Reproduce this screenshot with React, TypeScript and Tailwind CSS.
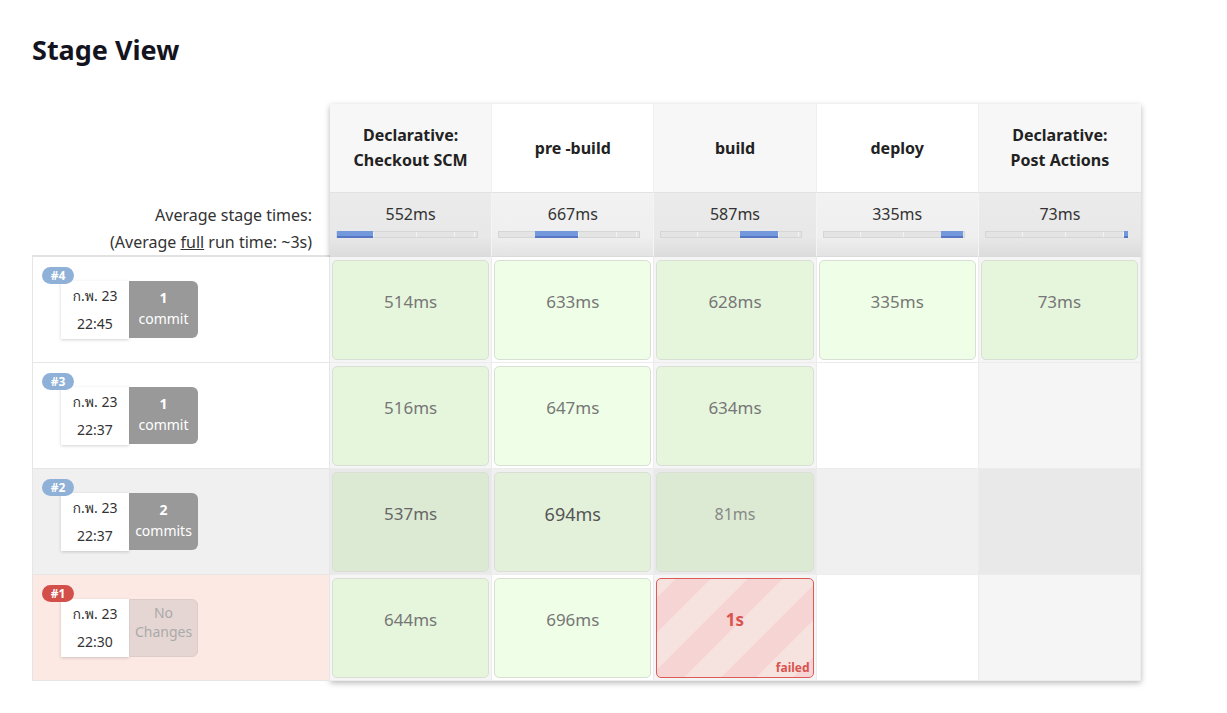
import React from "react";

type Cell = { t: string; kind: "ok" | "fail"; size?: string; color?: string } | null;

const stages = [
  ["Declarative:", "Checkout SCM"],
  ["pre -build"],
  ["build"],
  ["deploy"],
  ["Declarative:", "Post Actions"],
];

const avgs = [
  { t: "552ms", a: 0, b: 36 },
  { t: "667ms", a: 36, b: 79 },
  { t: "587ms", a: 79, b: 117 },
  { t: "335ms", a: 117, b: 139 },
  { t: "73ms", a: 138, b: 142 },
];

const builds: {
  id: string;
  time: string;
  c1: string;
  c2: string;
  kind: "normal" | "hover" | "failed";
  nochange?: boolean;
  cells: Cell[];
}[] = [
  {
    id: "#4",
    time: "22:45",
    c1: "1",
    c2: "commit",
    kind: "normal",
    cells: [
      { t: "514ms", kind: "ok" },
      { t: "633ms", kind: "ok" },
      { t: "628ms", kind: "ok" },
      { t: "335ms", kind: "ok" },
      { t: "73ms", kind: "ok" },
    ],
  },
  {
    id: "#3",
    time: "22:37",
    c1: "1",
    c2: "commit",
    kind: "normal",
    cells: [
      { t: "516ms", kind: "ok" },
      { t: "647ms", kind: "ok" },
      { t: "634ms", kind: "ok" },
      null,
      null,
    ],
  },
  {
    id: "#2",
    time: "22:37",
    c1: "2",
    c2: "commits",
    kind: "hover",
    cells: [
      { t: "537ms", kind: "ok" },
      { t: "694ms", kind: "ok", size: "big" },
      { t: "81ms", kind: "ok", size: "small" },
      null,
      null,
    ],
  },
  {
    id: "#1",
    time: "22:30",
    c1: "No",
    c2: "Changes",
    kind: "failed",
    nochange: true,
    cells: [
      { t: "644ms", kind: "ok" },
      { t: "696ms", kind: "ok" },
      { t: "1s", kind: "fail" },
      null,
      null,
    ],
  },
];

function BuildLabel({ b }: { b: (typeof builds)[number] }) {
  const rowBg =
    b.kind === "hover" ? "bg-[#f0f0f0]" : b.kind === "failed" ? "bg-[#fde9e4]" : "bg-white";
  return (
    <div className={`relative h-[106px] border-b border-x border-[#e6e6e6] ${rowBg}`}>
      <div
        className={`absolute left-[9px] top-[10px] z-10 flex h-[17px] w-[32px] items-center justify-center rounded-full text-[12px] font-bold leading-none text-white ${
          b.kind === "failed" ? "bg-[#d24f4a]" : "bg-[#8fb0d7]"
        }`}
      >
        {b.id}
      </div>
      <div className="flex pl-[28px] pt-[24px]">
        <div className="flex h-[58px] w-[68px] flex-col items-center bg-white pt-[3px] text-[14px] leading-[28px] text-[#333] shadow-[0_1px_3px_rgba(0,0,0,0.18)]">
          <span className="font-['Noto_Sans','Loma','Garuda','Noto_Sans_Thai_Looped','Tlwg_Typist',sans-serif] text-[14px] leading-[24px]">
            ก.พ. 23
          </span>
          <span className="leading-[32px]">{b.time}</span>
        </div>
        {b.nochange ? (
          <div className="flex h-[58px] w-[69px] flex-col items-center rounded-r-[6px] border border-[#dccdca] bg-[#e5d6d3] pt-[3px] text-[14px] leading-[19px] text-[#aaa]">
            <span>{b.c1}</span>
            <span>{b.c2}</span>
          </div>
        ) : (
          <div className="flex h-[57px] w-[69px] flex-col items-center rounded-r-[6px] bg-[#999999] pt-[6px] text-[14px] leading-[21px] text-white">
            <span className="font-bold">{b.c1}</span>
            <span>{b.c2}</span>
          </div>
        )}
      </div>
    </div>
  );
}

function BodyCell({ c, col, kind }: { c: Cell; col: number; kind: string }) {
  const odd = col % 2 === 0;
  let cellBg = odd ? "bg-[#f5f5f5]" : "bg-white";
  if (kind === "hover") cellBg = odd ? "bg-[#e9e9e9]" : "bg-[#f0f0f0]";
  let card: React.ReactNode = null;
  if (c && c.kind === "ok") {
    let cardBg = odd ? "bg-[#e6f6dd]" : "bg-[#effee6]";
    if (kind === "hover") cardBg = odd ? "bg-[#dcead3]" : "bg-[#e3f1db]";
    let txt = "text-[17px] text-[#777]";
    if (kind === "hover") txt = "text-[17px] text-[#666]";
    if (c.size === "big") txt = "text-[18px] text-[#555]";
    if (c.size === "small") txt = "text-[16px] text-[#888]";
    card = (
      <div
        className={`flex h-full w-full justify-center rounded-[5px] border border-[#d9dfd5] pt-[28px] ${cardBg}`}
      >
        <span className={`leading-[26px] ${txt}`}>{c.t}</span>
      </div>
    );
  } else if (c && c.kind === "fail") {
    card = (
      <div className="relative flex h-full w-full justify-center rounded-[5px] border border-[#dc5b57] bg-[repeating-linear-gradient(135deg,#f6e3df_0px,#f6e3df_13px,#f5d4d3_13px,#f5d4d3_38px,#f6e3df_38px,#f6e3df_51px)] pt-[28px]">
        <span className="text-[17px] font-bold leading-[26px] text-[#d9534f]">{c.t}</span>
        <span className="absolute bottom-[2px] right-[3px] text-[12px] font-bold leading-[14px] text-[#d9534f]">
          failed
        </span>
      </div>
    );
  }
  return (
    <div className={`h-[106px] border-b border-r border-[#ececec] pb-[2px] pl-[2px] pr-[2px] pt-[3px] ${cellBg}`}>
      {card}
    </div>
  );
}

export default function App() {
  return (
    <div className="min-h-[713px] w-[1227px] bg-white font-['Noto_Sans','Noto_Sans_Thai','Segoe_UI',sans-serif] text-[#333]">
      <div className="pl-[32px] pt-[30px]">
        <h1 className="text-[27px] font-bold leading-[40px] text-[#14141f]">Stage View</h1>
        <div className="mt-[34px] flex">
          <div className="w-[298px] shrink-0">
            <div className="h-[89px]" />
            <div className="flex h-[64px] flex-col items-end border-b-2 border-[#e2e2e2] pr-[18px] pt-[9px] text-[16px] leading-[27px] text-[#333]">
              <span>Average stage times:</span>
              <span>
                (Average <span className="underline">full</span> run time: ~3s)
              </span>
            </div>
            {builds.map((b) => (
              <BuildLabel key={b.id} b={b} />
            ))}
          </div>
          <div className="w-[811px] shrink-0 shadow-[0_2px_6px_rgba(0,0,0,0.28)]">
            <div className="grid grid-cols-5">
              {stages.map((s, i) => (
                <div
                  key={i}
                  className={`flex h-[89px] flex-col items-center justify-center border-b border-[#e2e2e2] text-[16px] font-bold leading-[25px] text-[#222] ${
                    i % 2 === 0 ? "bg-[#f7f7f7]" : "bg-white"
                  } ${i < 4 ? "border-r border-r-[#f0f0f0]" : ""}`}
                >
                  {s.map((l) => (
                    <span key={l}>{l}</span>
                  ))}
                </div>
              ))}
              {avgs.map((a, i) => (
                <div
                  key={a.t}
                  className={`flex h-[64px] flex-col items-center border-b border-[#dadada] pt-[9px] ${
                    i % 2 === 0
                      ? "bg-[linear-gradient(to_bottom,#ebebeb_0%,#e8e8e8_70%,#dcdcdc_100%)]"
                      : "bg-[linear-gradient(to_bottom,#f2f2f2_0%,#efefef_70%,#e3e3e3_100%)]"
                  } ${i < 4 ? "border-r border-r-[#f4f4f4]" : ""}`}
                >
                  <span className="text-[16px] leading-[24px] text-[#333]">{a.t}</span>
                  <div className="relative ml-[6px] mt-[5px] h-[7px] w-[142px] self-start border border-[#d6d6d6] bg-[#e4e4e4]">
                    <div className="absolute left-[36px] top-0 h-full w-px bg-[#f4f4f4]" />
                    <div className="absolute left-[79px] top-0 h-full w-px bg-[#f4f4f4]" />
                    <div className="absolute left-[117px] top-0 h-full w-px bg-[#f4f4f4]" />
                    <div className="absolute left-[137px] top-0 h-full w-px bg-[#f4f4f4]" />
                    <div
                      className="absolute top-[-1px] h-[7px] border-b-2 border-[#5577c4] bg-[#7399dc]"
                      style={{ left: a.a, width: a.b - a.a }}
                    />
                  </div>
                </div>
              ))}
              {builds.map((b) =>
                b.cells.map((c, i) => <BodyCell key={b.id + i} c={c} col={i} kind={b.kind} />)
              )}
            </div>
          </div>
        </div>
      </div>
    </div>
  );
}
